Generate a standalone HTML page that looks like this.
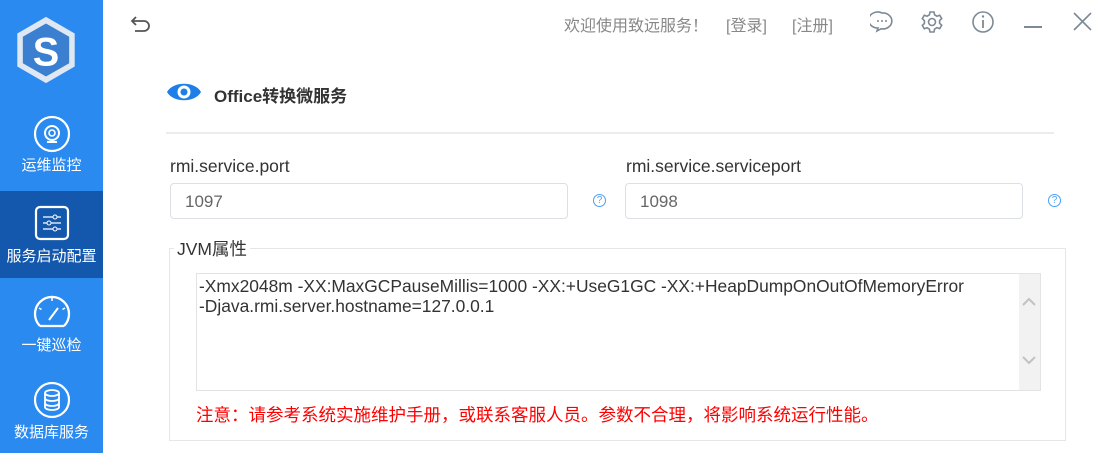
<!DOCTYPE html><html><head><meta charset="utf-8"><style>
*{margin:0;padding:0;box-sizing:border-box}
body{width:1117px;height:453px;overflow:hidden;background:#fff;font-family:"Liberation Sans","Noto Sans CJK SC",sans-serif;position:relative}
.side{position:absolute;left:0;top:0;width:103px;height:453px;background:#2b8af0}
.item{position:absolute;left:0;width:103px;text-align:center;color:#fff;font-size:15px}
.ab{position:absolute}
.t{position:absolute;white-space:nowrap}
.inp{position:absolute;height:36px;border:1px solid #dcdfe6;border-radius:4px;font-size:17px;color:#666;padding:8px 0 0 14px}
.q{position:absolute;width:13px;height:13px;border:1.3px solid #4a9ff5;border-radius:50%;color:#4a9ff5;font-size:10px;line-height:11px;text-align:center}
</style></head><body>
<div class="side">
<svg class="ab" style="left:14px;top:14px" width="64" height="72" viewBox="0 0 58 64"><polygon points="29,2 55,17 55,47 29,62 3,47 3,17" fill="#dfe8f2"/><polygon points="29,8 50,20 50,44 29,56 8,44 8,20" fill="#3a7fd0"/><text x="29" y="46" font-size="36" font-weight="bold" fill="#fff" text-anchor="middle" font-family="Liberation Sans">S</text></svg>
<div class="item" style="top:112px;height:70px"><svg width="40" height="40" viewBox="0 0 40 40" style="display:block;margin:2px auto 0 auto"><circle cx="20" cy="20" r="17" fill="none" stroke="#fff" stroke-width="2.2"/><circle cx="20" cy="19" r="7" fill="none" stroke="#fff" stroke-width="2"/><circle cx="20" cy="19" r="3" fill="none" stroke="#fff" stroke-width="1.6"/><path d="M15 28h10" stroke="#fff" stroke-width="2"/></svg><div style="margin-top:0">运维监控</div></div>
<div class="item" style="top:191px;height:87px;background:#1358ad"><svg width="36" height="36" viewBox="0 0 36 36" style="display:block;margin:14px auto 0 auto"><rect x="2" y="2" width="32" height="32" rx="4" fill="none" stroke="#fff" stroke-width="2.2"/><path d="M9 12h18M9 18h18M9 24h18" stroke="#fff" stroke-width="1.3"/><circle cx="21" cy="12" r="2" fill="#1358ad" stroke="#fff"/><circle cx="15" cy="18" r="2" fill="#1358ad" stroke="#fff"/><circle cx="21" cy="24" r="2" fill="#1358ad" stroke="#fff"/></svg><div style="margin-top:4px;font-size:15px">服务启动配置</div></div>
<div class="item" style="top:292px;height:70px"><svg width="40" height="36" viewBox="0 0 40 36" style="display:block;margin:2px auto 0 auto"><path d="M8 32A17 17 0 1 1 32 32" fill="none" stroke="#fff" stroke-width="2.3"/><path d="M8 32h24" stroke="#fff" stroke-width="2.3"/><path d="M17 26L26 14" stroke="#fff" stroke-width="2"/><path d="M20 4v3M7 14l2.5 1.5M33 14l-2.5 1.5" stroke="#fff" stroke-width="1.5"/></svg><div style="margin-top:4px">一键巡检</div></div>
<div class="item" style="top:378px;height:70px"><svg width="40" height="40" viewBox="0 0 40 40" style="display:block;margin:2px auto 0 auto"><circle cx="20" cy="20" r="17" fill="none" stroke="#fff" stroke-width="2.2"/><ellipse cx="20" cy="13" rx="7" ry="3" fill="none" stroke="#fff" stroke-width="1.8"/><path d="M13 13v14c0 4 14 4 14 0V13M13 18c0 4 14 4 14 0M13 23c0 4 14 4 14 0" fill="none" stroke="#fff" stroke-width="1.8"/></svg><div style="margin-top:1px">数据库服务</div></div>
</div>
<svg class="ab" style="left:130px;top:14px" width="22" height="20" viewBox="0 0 22 20"><path d="M6 3L2 7l4 4M2 7h12a5 5 0 0 1 0 10H5" fill="none" stroke="#555" stroke-width="1.8"/></svg>
<div class="t" style="left:564px;top:12px;font-size:16px;color:#888">欢迎使用致远服务！</div>
<div class="t" style="left:726px;top:12px;font-size:16px;color:#888">[登录]</div>
<div class="t" style="left:792px;top:12px;font-size:16px;color:#888">[注册]</div>
<svg class="ab" style="left:870px;top:10px" width="24" height="24" viewBox="0 0 24 24"><path d="M12 3a9 8 0 1 0 -4 15l-1 3 4-2.2A9 8 0 1 0 12 3z" fill="none" stroke="#7d8a96" stroke-width="1.6"/><circle cx="8" cy="11" r="1" fill="#7d8a96"/><circle cx="12" cy="11" r="1" fill="#7d8a96"/><circle cx="16" cy="11" r="1" fill="#7d8a96"/></svg>
<svg class="ab" style="left:920px;top:10px" width="24" height="24" viewBox="0 0 24 24"><path d="M10 2h4l.6 2.8 2.4 1.4 2.7-1 2 3.4-2.1 1.9v2.8l2.1 1.9-2 3.4-2.7-1-2.4 1.4L14 22h-4l-.6-2.8-2.4-1.4-2.7 1-2-3.4 2.1-1.9v-2.8L2.3 8.6l2-3.4 2.7 1 2.4-1.4z" fill="none" stroke="#7d8a96" stroke-width="1.6"/><circle cx="12" cy="12" r="3.5" fill="none" stroke="#7d8a96" stroke-width="1.6"/></svg>
<svg class="ab" style="left:971px;top:10px" width="24" height="24" viewBox="0 0 24 24"><circle cx="12" cy="12" r="10" fill="none" stroke="#7d8a96" stroke-width="1.6"/><path d="M12 10v8" stroke="#7d8a96" stroke-width="1.8"/><circle cx="12" cy="6.5" r="1.2" fill="#7d8a96"/></svg>
<div class="ab" style="left:1024px;top:26px;width:18px;height:2px;background:#7d8a96"></div>
<svg class="ab" style="left:1073px;top:12px" width="19" height="19" viewBox="0 0 19 19"><path d="M1 1l17 17M18 1L1 18" stroke="#7d8a96" stroke-width="1.6"/></svg>
<svg class="ab" style="left:166px;top:79px" width="36" height="26" viewBox="0 0 36 26"><path d="M1 13C7 2 29 2 35 13 29 24 7 24 1 13z" fill="#1e7fe8"/><circle cx="18" cy="13" r="6.5" fill="#fff"/><circle cx="18" cy="13" r="3.5" fill="#1e7fe8"/></svg>
<div class="t" style="left:214px;top:82px;font-size:17px;font-weight:bold;color:#333">Office转换微服务</div>
<div class="ab" style="left:166px;top:132px;width:888px;height:2px;background:#ececec"></div>
<div class="t" style="left:170px;top:156px;font-size:17.5px;color:#333">rmi.service.port</div>
<div class="t" style="left:626px;top:156px;font-size:17.5px;color:#333">rmi.service.serviceport</div>
<div class="inp" style="left:170px;top:183px;width:398px">1097</div>
<div class="inp" style="left:625px;top:183px;width:398px">1098</div>
<div class="q" style="left:593px;top:194px">?</div>
<div class="q" style="left:1048px;top:194px">?</div>
<div class="ab" style="left:169px;top:248px;width:897px;height:193px;border:1px solid #e6e6e6"></div>
<div class="t" style="left:174px;top:236px;font-size:17.5px;color:#333;background:#fff;padding:0 3px">JVM属性</div>
<div class="ab" style="left:196px;top:273px;width:845px;height:118px;border:1px solid #e3e3e3"></div>
<div class="ab" style="left:1019px;top:274px;width:21px;height:116px;background:#f2f2f2"></div>
<svg class="ab" style="left:1021px;top:294px" width="16" height="80" viewBox="0 0 16 80"><path d="M2 11l6-6 6 6M2 63l6 6 6-6" fill="none" stroke="#c2c2c2" stroke-width="2"/></svg>
<div class="t" style="left:199px;top:276px;font-size:17.4px;color:#333;line-height:20px">-Xmx2048m -XX:MaxGCPauseMillis=1000 -XX:+UseG1GC -XX:+HeapDumpOnOutOfMemoryError<br>-Djava.rmi.server.hostname=127.0.0.1</div>
<div class="t" style="left:196px;top:402px;font-size:17.5px;color:#f00">注意：请参考系统实施维护手册，或联系客服人员。参数不合理，将影响系统运行性能。</div>
</body></html>
